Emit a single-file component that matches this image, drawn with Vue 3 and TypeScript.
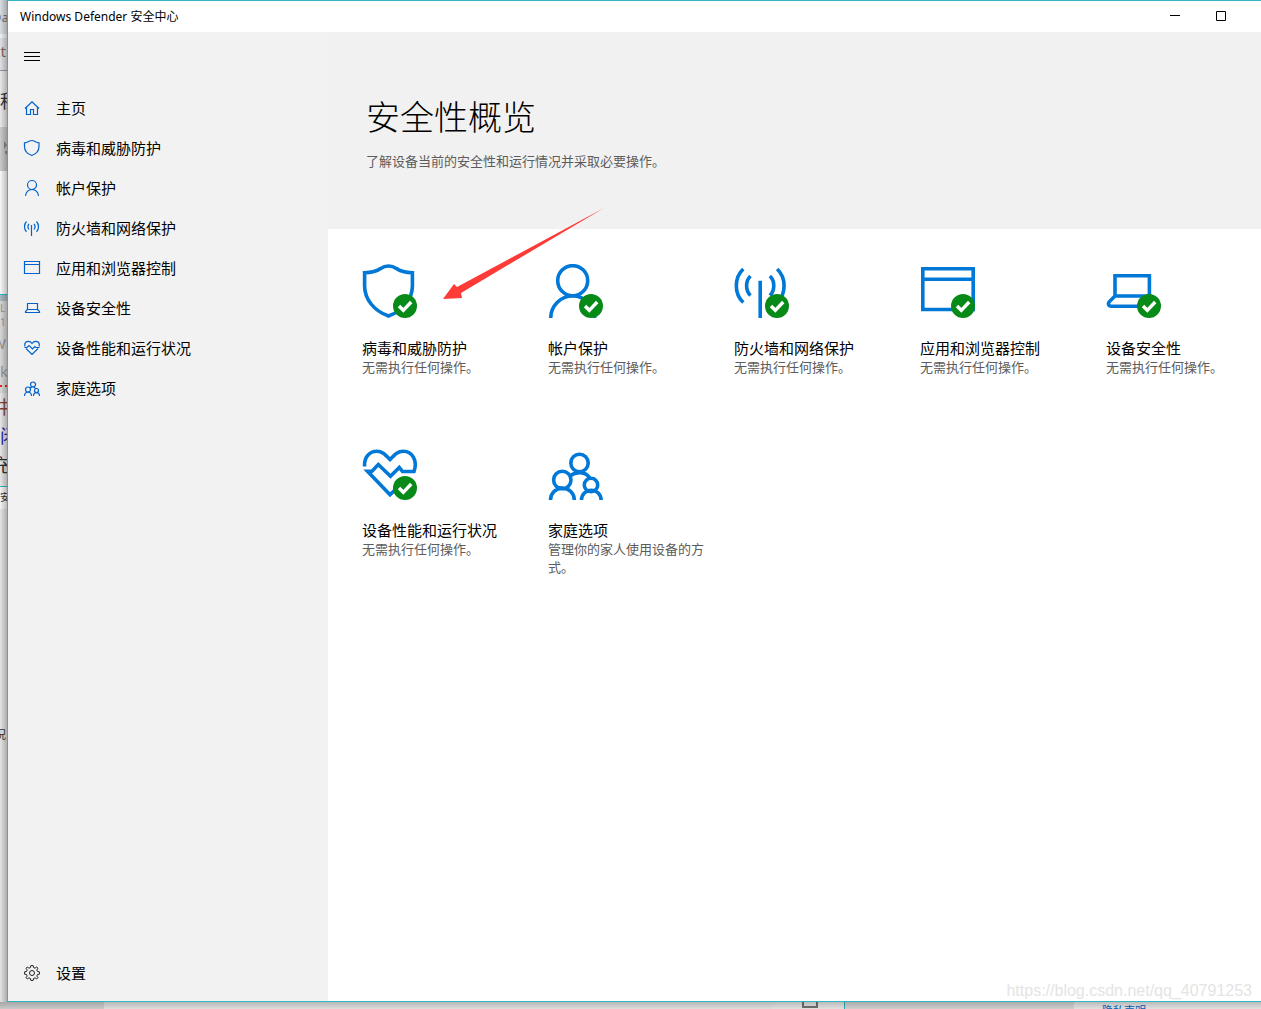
<script setup lang="ts">
import { ref } from 'vue'

interface NavItem {
  id: string
  label: string
  icon: string
}

interface Card {
  id: string
  title: string
  text: string
  icon: string
  ok: boolean
}

const current = ref('home')

const nav: NavItem[] = [
  { id: 'home', label: '主页', icon: 'M1 8.5 8 1.8 15 8.5M2.5 7.2V14.5H6.5V9.5H9.5V14.5H13.5V7.2' },
  { id: 'virus', label: '病毒和威胁防护', icon: 'M.5 2.8C4 2.8 5 .5 7.8 .5S11.500 2.800 15 2.800V6.500C15 10.800 12 14 7.800 15.500C3.500 14 .5 10.800 .5 6.500Z' },
  { id: 'account', label: '帐户保护', icon: 'M12.500 5A4.500 4.500 0 1 1 3.500 5A4.500 4.500 0 1 1 12.500 5ZM1.500 16A6.500 6.500 0 0 1 14.500 16' },
  { id: 'network', label: '防火墙和网络保护', icon: 'M7.500 5V16M5 3.800C3.700 5.500 3.700 7.800 5 9.500M10 3.800C11.300 5.500 11.300 7.800 10 9.500M2.500 1.500C-.2 4.500-.2 8.800 2.500 11.800M12.500 1.500C15.200 4.500 15.200 8.800 12.500 11.800' },
  { id: 'app', label: '应用和浏览器控制', icon: 'M.5 1.500H15.500V13.500H.5ZM.5 4.500H15.500' },
  { id: 'device', label: '设备安全性', icon: 'M3.500 9.500V3.500H13.500V9.500ZM3.500 9.500 1.500 11.500V12.500H15.500V11.500L13.500 9.500' },
  { id: 'health', label: '设备性能和运行状况', icon: 'M1 6.500C-.3 1.500 5-.5 8 3.500C11-.5 16.500 1.500 15 6.500M.5 7.500H3L5 5.500 8.500 9 10.800 6.500 12 7.500H15.500M2 8.500 8 14.500 14 8.500' },
  { id: 'family', label: '家庭选项', icon: 'M11.500 4.500A2.500 2.500 0 1 1 6.500 4.500A2.500 2.500 0 1 1 11.500 4.500ZM6.500 9.500A2.500 2.500 0 1 1 1.500 9.500A2.500 2.500 0 1 1 6.500 9.500ZM14.500 10.500A2 2 0 1 1 10.500 10.500A2 2 0 1 1 14.500 10.500ZM.5 16C.5 11 7.500 11 7.500 16M9.500 16C9.500 11.500 15.500 11.500 15.500 16M6.500 7.800C8 6.500 10 6.500 11.500 8.500' }
]

const noAction = '无需执行任何操作。'

const cards: Card[] = [
  {
    id: 'virus', title: '病毒和威胁防护', text: noAction, ok: true,
    icon: 'M2.600 8.700C12 8.700 16 6.500 19 4.300C23 1.200 30 1.200 34 4.300C37 6.500 41 8.700 50.400 8.700V22C50.400 35 41 47 26.500 52C12 47 2.600 35 2.600 22Z'
  },
  {
    id: 'account', title: '帐户保护', text: noAction, ok: true,
    icon: 'M39.700 16.700A15 15 0 1 1 9.700 16.700A15 15 0 1 1 39.700 16.700ZM2.700 54A22 22 0 0 1 46.700 54'
  },
  {
    id: 'network', title: '防火墙和网络保护', text: noAction, ok: true,
    icon: 'M26.200 16.700V54M16.500 12C11.300 17 11.300 26.500 16.500 31.500M35.900 12C41.100 17 41.100 26.500 35.900 31.500M9.300 5C0 13.500 0 30 9.300 38.500M43.100 5C52.400 13.500 52.400 30 43.100 38.500'
  },
  {
    id: 'app', title: '应用和浏览器控制', text: noAction, ok: true,
    icon: 'M2.800 4.800H53.200V45.500H2.800ZM2.800 15.300H53.200'
  },
  {
    id: 'device', title: '设备安全性', text: noAction, ok: true,
    icon: 'M9 32V11.800H43.400V32ZM9 32 3.500 37.500C1.500 39.500 2.500 42.300 5.500 42.300H46L43.400 32'
  },
  {
    id: 'health', title: '设备性能和运行状况', text: noAction, ok: true,
    icon: 'M2.600 20.500C2 11 7.500 5.200 14.800 5.200C20 5.200 22.500 7.800 28 13.500C33.500 7.800 36 5.200 41.200 5.200C50 5.200 56 14 52 25.500H40.500L37.300 21.500 28.500 30.300 16.300 18.500 10 25.200H5.500L28 48.700 36 41'
  },
  {
    id: 'family', title: '家庭选项', text: '管理你的家人使用设备的方式。', ok: false,
    icon: 'M40.200 17A8.700 8.700 0 1 1 22.800 17A8.700 8.700 0 1 1 40.200 17ZM23 34A8.700 8.700 0 1 1 5.600 34A8.700 8.700 0 1 1 23 34ZM49.700 39A6.700 6.700 0 1 1 36.300 39A6.700 6.700 0 1 1 49.700 39ZM2.500 54A11.900 11.900 0 0 1 26.300 54M33.500 54A9.800 9.800 0 0 1 53.100 54M22.500 29.500C28 25.500 37 25 42 32'
  }
]
</script>

<template>
  <div class="desktop">
    <div class="behind" aria-hidden="true">
      <div class="seg tab">Da</div>
      <div class="seg address">tt</div>
      <div class="seg page">程</div>
      <div class="seg tool"><svg width="7" height="44"><path d="M4 14V22L7 18ZM5 24H7V28L5 26Z" fill="#888" /></svg></div>
      <div class="seg blank"></div>
      <div class="seg edge"></div>
      <div class="seg words"><span class="tiny">L</span><span class="tiny">1</span><span class="word">W</span><span class="word typo">k</span></div>
      <div class="seg code"><span class="brown">井</span><span class="blue">闭</span><span>充</span></div>
      <div class="seg caption">安</div>
      <div class="seg rest">况</div>
    </div>
    <div class="under" aria-hidden="true">
      <div class="u1"></div>
      <div class="u2"></div>
      <div class="u3"><i></i></div>
      <div class="u4"></div>
      <div class="u5">隐私声明</div>
    </div>

    <div class="window">
      <header class="titlebar">
        <span class="caption-text">Windows Defender 安全中心</span>
        <button type="button" class="sys" aria-label="最小化">
          <svg width="10" height="10"><path d="M0 4.500H10" /></svg>
        </button>
        <button type="button" class="sys" aria-label="最大化">
          <svg width="10" height="10"><path d="M.5 .5H9.500V9.500H.5Z" /></svg>
        </button>
      </header>

      <div class="body">
        <aside class="sidebar">
          <button type="button" class="menu" aria-label="菜单">
            <svg width="16" height="16"><path d="M0 4.500H16M0 8.500H16M0 12.500H16" /></svg>
          </button>
          <nav class="nav">
            <a v-for="item in nav" :key="item.id" class="item" :href="'#' + item.id" @click="current = item.id">
              <svg class="glyph" width="16" height="16" viewBox="0 0 16 16"><path :d="item.icon" /></svg>
              <span>{{ item.label }}</span>
            </a>
          </nav>
          <a class="item settings" href="#settings">
            <svg class="glyph" width="16" height="16" viewBox="0 0 16 16">
              <path d="M6.800 .6H9.200L9.600 2.600 11 3.200 12.700 2 14 3.300 12.800 5 13.400 6.400 15.400 6.800V9.200L13.400 9.600 12.800 11 14 12.700 12.700 14 11 12.800 9.600 13.400 9.200 15.400H6.800L6.400 13.400 5 12.800 3.300 14 2 12.700 3.200 11 2.600 9.600 .6 9.200V6.800L2.600 6.400 3.200 5 2 3.300 3.300 2 5 3.200 6.400 2.600Z" />
              <circle cx="8" cy="8" r="2.500" />
            </svg>
            <span>设置</span>
          </a>
        </aside>

        <main class="main">
          <div class="hero">
            <h1>安全性概览</h1>
            <p>了解设备当前的安全性和运行情况并采取必要操作。</p>
          </div>
          <div class="cards">
            <a v-for="card in cards" :key="card.id" class="card" :href="'#' + card.id" @click="current = card.id">
              <svg class="picture" width="56" height="54" viewBox="0 0 56 54">
                <path :d="card.icon" />
                <g v-if="card.ok" class="badge">
                  <circle cx="43" cy="42" r="12" />
                  <path d="M37 42 41.300 46.300 49.200 38" />
                </g>
              </svg>
              <span class="title">{{ card.title }}</span>
              <span class="text">{{ card.text }}</span>
            </a>
          </div>
          <svg class="arrow" width="162" height="92" viewBox="0 0 162 92" aria-hidden="true">
            <path d="M1 91 12 76 15 79 162 0 19 85 20 90Z" fill="#ff3b38" />
          </svg>
          <span class="watermark">https://blog.csdn.net/qq_40791253</span>
        </main>
      </div>
    </div>
  </div>
</template>

<style>
body {
  margin: 0;
}
</style>

<style scoped>
* {
  box-sizing: border-box;
}

.desktop {
  position: relative;
  display: flex;
  min-height: 100vh;
  padding: 0 0 7px 7px;
  overflow: hidden;
  background: #dcdcdc;
  color: #000;
  font-family: "Noto Sans", "Noto Sans CJK SC", sans-serif;
}

.behind {
  position: absolute;
  inset: 0 auto 0 0;
  width: 7px;
  display: flex;
  flex-direction: column;
  overflow: hidden;
  font-size: 18px;
}

.behind::after {
  content: "";
  position: absolute;
  inset: 0;
  background: linear-gradient(to right, rgba(0, 0, 0, 0), rgba(0, 0, 0, 0.24));
}

.seg {
  flex: none;
  overflow: hidden;
  white-space: nowrap;
  color: #333;
}

.tab {
  height: 34px;
  background: #d9dee2;
  color: #777;
  font-size: 13px;
  line-height: 34px;
  text-indent: -8px;
}

.address {
  height: 37px;
  border-top: 4px solid #f0f2f4;
  border-bottom: 1px solid #999;
  background: #dfe1e5;
  color: #865;
  font-size: 15px;
  line-height: 26px;
  text-indent: -5px;
}

.page {
  height: 56px;
  background: #e8e8e8;
  line-height: 60px;
}

.tool {
  height: 44px;
  background: #cacaca;
}

.blank {
  height: 123px;
  background: #f8f8f8;
}

.edge {
  height: 7px;
  border-top: 1px solid #2fb9c4;
  background: #a9b8bf;
}

.words {
  display: flex;
  flex-direction: column;
  height: 92px;
  background: #d8d8d8;
  color: #999;
}

.tiny {
  font-size: 10px;
  line-height: 14px;
}

.word {
  font-size: 15px;
  line-height: 28px;
  text-indent: -8px;
}

.typo {
  border-bottom: 2px dotted #e22;
  text-indent: 0;
}

.code {
  display: flex;
  flex-direction: column;
  height: 93px;
  background: #e6e6e6;
  line-height: 29px;
}

.brown {
  color: #843;
  text-indent: -8px;
}

.blue {
  color: #22a;
}

.code span:last-child {
  text-indent: -8px;
}

.caption {
  height: 23px;
  border-top: 1px solid #2fb9c4;
  background: #f4f4f4;
  font-size: 10px;
  line-height: 20px;
}

.rest {
  flex: 1;
  padding-top: 216px;
  background: #e4e4e4;
  font-size: 11px;
  line-height: 20px;
  text-indent: -5px;
}

.under {
  position: absolute;
  inset: auto 0 0 0;
  height: 7px;
  display: flex;
  overflow: hidden;
  background: #dadada;
}

.under::after {
  content: "";
  position: absolute;
  inset: 0;
  background: linear-gradient(rgba(0, 0, 0, 0.24), rgba(0, 0, 0, 0.08));
}

.u1 {
  width: 104px;
  background: #dadada;
}

.u2 {
  width: 668px;
  background: #f0f0f0;
}

.u3 {
  width: 73px;
  padding-left: 30px;
  border-right: 1px solid #2fb9c4;
  background: #f4f4f4;
}

.u3 i {
  display: block;
  width: 16px;
  height: 6px;
  border: 2px solid #777;
  border-top: 0;
}

.u4 {
  width: 229px;
  background: #e0e0e0;
}

.u5 {
  flex: 1;
  padding-left: 28px;
  background: #f4f4f4;
  color: #0067c8;
  font-size: 11px;
  line-height: 18px;
}

.window {
  position: relative;
  flex: 1;
  display: flex;
  flex-direction: column;
  min-width: 0;
  border: 1px solid #2fb5c3;
  border-right: 0;
  background: #fff;
}

.titlebar {
  display: flex;
  align-items: center;
  height: 31px;
  padding: 0 17px 0 12px;
}

.caption-text {
  flex: 1;
  font-size: 12px;
  line-height: 30px;
}

button {
  padding: 0;
  border: 0;
  background: none;
}

button svg {
  display: block;
  margin: auto;
  fill: none;
  stroke: #000;
}

.sys {
  width: 46px;
  height: 28px;
  margin-bottom: 2px;
}

.body {
  flex: 1;
  display: flex;
}

.sidebar {
  display: flex;
  flex: 0 0 320px;
  flex-direction: column;
  padding-bottom: 8px;
  background: #f2f2f2;
}

.menu {
  width: 48px;
  height: 48px;
  margin-bottom: 8px;
}

.item {
  display: flex;
  align-items: center;
  gap: 16px;
  height: 40px;
  padding: 0 16px;
  color: #000;
  font-size: 15px;
  line-height: 20px;
  text-decoration: none;
}

.glyph {
  overflow: visible;
  fill: none;
  stroke: #0062cc;
  stroke-width: 1.2;
}

.settings {
  margin-top: auto;
}

.settings .glyph {
  stroke: #222;
  stroke-width: 1;
}

.main {
  position: relative;
  flex: 1;
  min-width: 0;
  overflow: hidden;
}

.hero {
  height: 197px;
  padding: 61px 38px 0;
  background: #f1f1f1;
}

h1 {
  margin: 0;
  font-size: 34px;
  font-weight: 300;
  line-height: 48px;
}

.hero p {
  margin: 10px 0 0;
  color: #5c5c5c;
  font-size: 13px;
  line-height: 20px;
}

.cards {
  display: grid;
  grid-template-columns: repeat(5, 156px);
  gap: 56px 30px;
  padding: 35px 0 35px 34px;
}

.card {
  display: flex;
  flex-direction: column;
  min-height: 126px;
  color: #000;
  text-decoration: none;
}

.picture {
  margin-bottom: 20px;
  fill: none;
  stroke: #0078d7;
  stroke-width: 3.6;
}

.badge circle {
  fill: #088a18;
  stroke: none;
}

.badge path {
  stroke: #fff;
  stroke-width: 3.4;
}

.title {
  font-size: 15px;
  line-height: 20px;
  white-space: nowrap;
}

.text {
  color: #5c5c5c;
  font-size: 13px;
  line-height: 18px;
}

.arrow {
  position: absolute;
  top: 176px;
  left: 114px;
}

.watermark {
  position: absolute;
  right: 9px;
  bottom: 0;
  color: #e4e4e4;
  font-family: "Liberation Sans", sans-serif;
  font-size: 16px;
  line-height: 20px;
}

@media (max-width: 1200px) {
  .cards {
    grid-template-columns: repeat(auto-fill, 156px);
  }
}
</style>
